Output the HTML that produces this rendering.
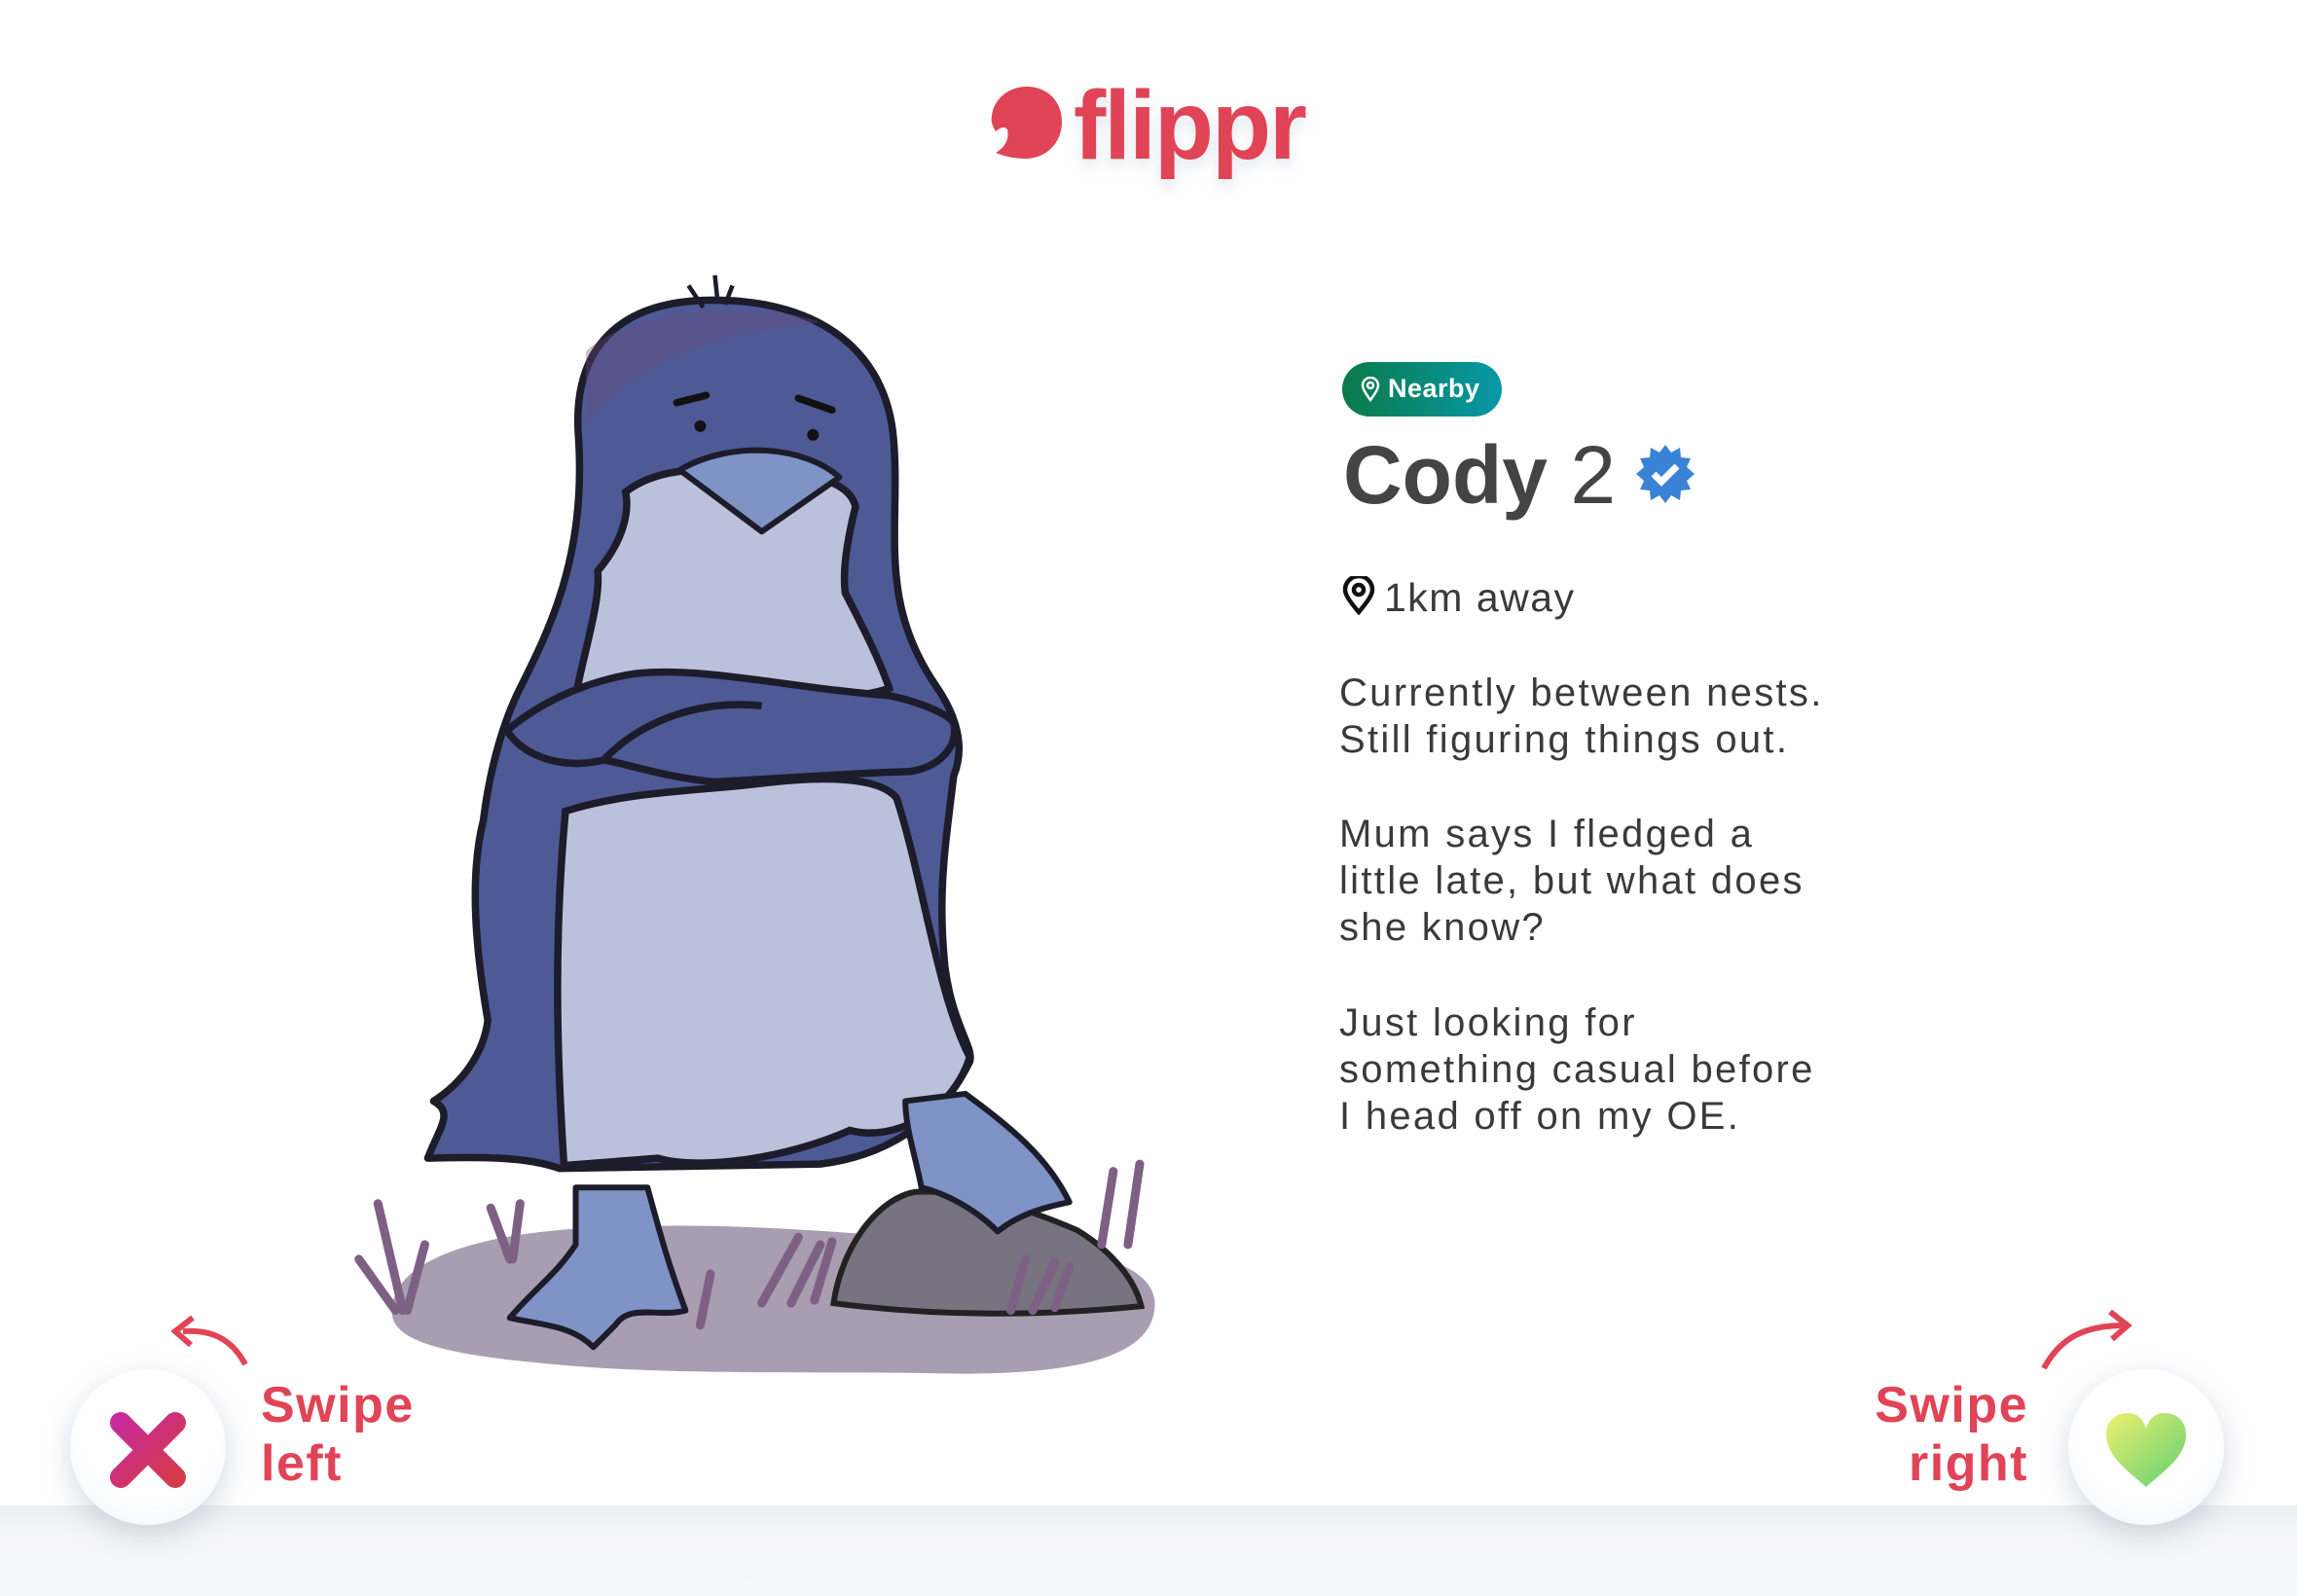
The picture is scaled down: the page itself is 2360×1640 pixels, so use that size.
<!DOCTYPE html>
<html><head><meta charset="utf-8"><style>
html,body{margin:0;padding:0}
body{width:2360px;height:1640px;position:relative;overflow:hidden;background:#fff;font-family:"Liberation Sans",sans-serif}
.band{position:absolute;left:0;top:1547px;width:2360px;height:93px;background:linear-gradient(#eceef2,#f5f6f8 30px,#f7f8fa)}
.t{position:absolute;left:1376px;font-size:40px;color:#3a3a3a;white-space:nowrap;line-height:1;letter-spacing:2.3px}
.btn{position:absolute;width:160px;height:160px;border-radius:50%;background:radial-gradient(circle at 50% 40%,#fff 55%,#eef2f8 100%);box-shadow:0 10px 30px rgba(120,130,160,.3)}
.sw{position:absolute;font-weight:bold;font-size:52px;color:#e04456;line-height:60px;letter-spacing:1.5px}
</style></head><body>
<div class="band"></div>

<!-- logo -->
<svg style="position:absolute;left:1015px;top:85px" width="80" height="85" viewBox="0 0 80 85">
<path d="M40 4 C62 4 76 20 76 40 C76 62 60 78 38 78 C28 78 18 76 8 72 C18 66 22 58 20 48 C17 44 13 46 8 50 C4 44 3 38 4 34 C6 16 22 4 40 4Z" fill="#e04456"/>
</svg>
<div style="position:absolute;left:1103px;top:72px;font-size:100px;font-weight:bold;color:#e04456;letter-spacing:-2px;text-shadow:0 8px 14px rgba(150,160,180,.25)">flippr</div>

<!-- penguin -->
<svg style="position:absolute;left:0;top:0" width="2360" height="1640" viewBox="0 0 1568 1090" preserveAspectRatio="none">
<path d="M268 900 C262 860 330 840 420 838 C520 834 600 845 700 850 C760 855 792 870 788 895 C784 925 740 940 640 938 C540 936 450 940 360 930 C300 924 272 915 268 900Z" fill="#a99db1"/>
<path d="M569 890 C575 850 600 818 625 814 C660 812 700 825 735 840 C760 855 775 875 779 892 C700 900 630 898 569 890Z" fill="#777380" stroke="#222" stroke-width="4"/>
<g stroke="#7e6085" stroke-width="6" stroke-linecap="round" fill="none">
<path d="M258 822 L275 895 M245 860 L270 895 M290 850 L278 895"/>
<path d="M335 825 L348 860 M355 822 L350 860"/>
<path d="M520 890 L545 845 M540 890 L560 850 M556 888 L568 848"/>
<path d="M690 895 L700 860 M705 895 L720 862 M720 893 L730 865"/>
<path d="M752 850 L760 800 M770 850 L778 795"/>
<path d="M478 905 L485 870"/>
</g>
<!-- body -->
<path d="M395 300 C390 240 420 205 487 205 C560 205 605 240 610 300 C615 360 598 410 640 470 C660 500 655 520 651 530 C645 580 640 610 645 660 C650 700 665 715 662 725 C640 770 600 790 560 795 L382 798 C360 790 330 790 292 791 C300 770 310 760 296 752 C315 740 330 720 333 697 C325 650 320 600 330 560 C335 520 345 490 355 470 C375 430 400 380 395 300Z" fill="#4e5a96" stroke="#1c1c2a" stroke-width="5" stroke-linejoin="round"/>
<path d="M400 240 C430 210 520 205 560 220 C520 225 450 230 400 290Z" fill="#6b4c7c" opacity=".35"/>
<path d="M470 195 L480 210 M488 188 L490 207 M500 195 L495 208" stroke="#1c1c2a" stroke-width="3"/>
<!-- belly -->
<path d="M386 554 C430 540 480 540 520 535 C560 530 600 530 612 545 C630 600 640 680 662 722 C650 760 610 780 580 772 C540 790 480 800 449 791 L385 796 C380 720 378 640 386 554Z" fill="#bcc1db" stroke="#1c1c2a" stroke-width="5"/>
<!-- face -->
<path d="M427 336 C445 322 470 318 520 322 C560 324 580 330 584 346 C578 370 575 390 577 405 C590 430 600 450 607 470 C580 480 520 478 470 465 C440 470 410 478 393 475 C400 440 410 410 408 390 C425 370 430 350 427 336Z" fill="#bcc1db" stroke="#1c1c2a" stroke-width="5"/>
<!-- arms -->
<path d="M346 499 C380 470 420 462 434 460 C480 455 540 470 607 475 C630 480 648 488 651 494 C655 510 640 525 620 527 C580 528 530 532 487 534 C450 530 430 522 412 519 C390 525 360 520 346 499Z" fill="#4e5a96" stroke="#1c1c2a" stroke-width="5"/>
<path d="M412 519 C440 490 480 478 520 482" fill="none" stroke="#1c1c2a" stroke-width="5"/>
<!-- beak -->
<path d="M464 321 C500 300 550 305 573 326 L520 363Z" fill="#7f93c6" stroke="#1c1c2a" stroke-width="4" stroke-linejoin="round"/>
<circle cx="478" cy="291" r="4" fill="#111"/><circle cx="555" cy="297" r="4" fill="#111"/>
<path d="M462 275 L482 270 M545 272 L568 280" stroke="#111" stroke-width="5" stroke-linecap="round"/>
<!-- feet -->
<path d="M393 811 L442 811 C450 840 455 860 468 895 C450 900 430 890 420 905 L405 920 C390 905 370 905 348 900 C365 880 380 870 393 850Z" fill="#7f93c6" stroke="#1c1c2a" stroke-width="4" stroke-linejoin="round"/>
<path d="M618 752 L659 747 C690 770 715 790 730 821 C710 825 695 830 681 841 C665 825 645 815 629 811 C625 790 618 770 618 752Z" fill="#7f93c6" stroke="#1c1c2a" stroke-width="4" stroke-linejoin="round"/>
</svg>

<!-- nearby pill -->
<div style="position:absolute;left:1379px;top:372px;width:164px;height:56px;border-radius:28px;background:linear-gradient(90deg,#0b7a48,#0898a8)"></div>
<svg style="position:absolute;left:1398px;top:387px" width="20" height="26" viewBox="0 0 20 26"><path d="M10 24 C4 16 2 12 2 9 A8 8 0 0 1 18 9 C18 12 16 16 10 24Z" fill="none" stroke="#fff" stroke-width="2.5"/><circle cx="10" cy="9" r="3" fill="none" stroke="#fff" stroke-width="2.5"/></svg>
<div style="position:absolute;left:1426px;top:384px;font-size:27px;font-weight:bold;color:#fff;letter-spacing:0.5px">Nearby</div>

<!-- name -->
<div style="position:absolute;left:1380px;top:440px;font-size:84px;color:#444;white-space:nowrap"><b>Cody</b> <span style="font-weight:normal">2</span></div>
<svg style="position:absolute;left:1679px;top:455px" width="64" height="64" viewBox="0 0 64 64">
<polygon fill="#3a82d6" points="32,2 38,10 47,5 48,15 58,16 54,25 62,32 54,39 58,48 48,49 47,59 38,54 32,62 26,54 17,59 16,49 6,48 10,39 2,32 10,25 6,16 16,15 17,5 26,10"/>
<path d="M20 32 L28 40 L44 24" fill="none" stroke="#fff" stroke-width="7"/>
</svg>

<!-- location -->
<svg style="position:absolute;left:1379px;top:592px" width="34" height="40" viewBox="0 0 34 40"><path d="M17 37 C7 25 3 19 3 14 A14 14 0 0 1 31 14 C31 19 27 25 17 37Z" fill="none" stroke="#111" stroke-width="4.5"/><circle cx="17" cy="14" r="5" fill="none" stroke="#111" stroke-width="4.5"/></svg>
<div class="t" style="left:1422px;top:594px;font-size:41px;letter-spacing:1.5px">1km away</div>

<div class="t" style="top:692px">Currently between nests.</div>
<div class="t" style="top:740px">Still figuring things out.</div>
<div class="t" style="top:837px">Mum says I fledged a</div>
<div class="t" style="top:885px">little late, but what does</div>
<div class="t" style="top:933px">she know?</div>
<div class="t" style="top:1031px">Just looking for</div>
<div class="t" style="top:1079px">something casual before</div>
<div class="t" style="top:1127px">I head off on my OE.</div>

<!-- left button -->
<div class="btn" style="left:72px;top:1407px"></div>
<svg style="position:absolute;left:112px;top:1450px" width="80" height="80" viewBox="0 0 80 80">
<defs><linearGradient id="xg" x1="0" y1="0" x2="1" y2="1"><stop offset="0" stop-color="#c82a9a"/><stop offset="1" stop-color="#d53a4a"/></linearGradient></defs>
<path d="M12 12 L68 68 M68 12 L12 68" stroke="url(#xg)" stroke-width="22" stroke-linecap="round"/>
</svg>
<svg style="position:absolute;left:160px;top:1340px" width="100" height="70" viewBox="0 0 100 70">
<path d="M92 62 C78 36 58 26 28 28" fill="none" stroke="#e04456" stroke-width="6"/>
<path d="M38 14 L20 28 L36 42" fill="none" stroke="#e04456" stroke-width="6"/>
</svg>
<div class="sw" style="left:268px;top:1414px">Swipe<br>left</div>

<!-- right button -->
<div class="btn" style="left:2125px;top:1407px"></div>
<svg style="position:absolute;left:2160px;top:1450px" width="90" height="82" viewBox="0 0 90 82">
<defs><linearGradient id="hg" x1="0" y1="0" x2="1" y2="1"><stop offset="0" stop-color="#eef070"/><stop offset="1" stop-color="#5fcf72"/></linearGradient></defs>
<path d="M45 78 C30 64 4 48 4 24 C4 10 14 2 26 2 C36 2 42 8 45 18 C48 8 54 2 64 2 C76 2 86 10 86 24 C86 48 60 64 45 78Z" fill="url(#hg)"/>
</svg>
<svg style="position:absolute;left:2090px;top:1340px" width="110" height="70" viewBox="0 0 110 70">
<path d="M10 66 C26 36 50 22 92 22" fill="none" stroke="#e04456" stroke-width="6"/>
<path d="M78 8 L96 22 L80 36" fill="none" stroke="#e04456" stroke-width="6"/>
</svg>
<div class="sw" style="left:1880px;width:204px;text-align:right;top:1414px">Swipe<br>right</div>
</body></html>
